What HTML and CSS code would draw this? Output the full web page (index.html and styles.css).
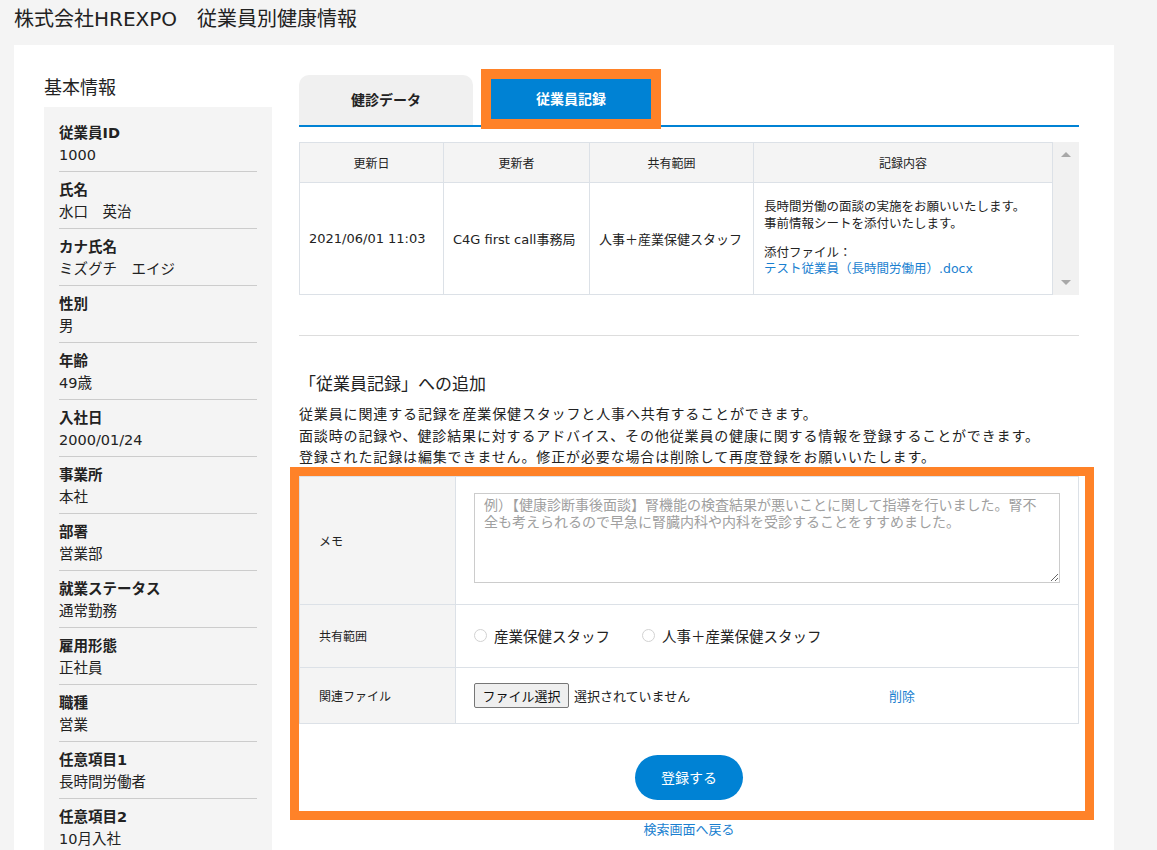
FILE: index.html
```html
<!DOCTYPE html>
<html lang="ja">

<head>
    <meta charset="UTF-8">
    <meta name="viewport" content="width=device-width, initial-scale=1.0">
    <title>従業員別健康情報</title>
    <link rel="stylesheet" href="styles.css">
</head>

<body>
    <header class="page-title">株式会社HREXPO　従業員別健康情報</header>

    <div class="container">
        <aside class="sidebar">
            <h2 class="sidebar-title">基本情報</h2>
            <dl class="info-list">
                <div class="info-item"><dt>従業員ID</dt><dd>1000</dd></div>
                <div class="info-item"><dt>氏名</dt><dd>水口　英治</dd></div>
                <div class="info-item"><dt>カナ氏名</dt><dd>ミズグチ　エイジ</dd></div>
                <div class="info-item"><dt>性別</dt><dd>男</dd></div>
                <div class="info-item"><dt>年齢</dt><dd>49歳</dd></div>
                <div class="info-item"><dt>入社日</dt><dd>2000/01/24</dd></div>
                <div class="info-item"><dt>事業所</dt><dd>本社</dd></div>
                <div class="info-item"><dt>部署</dt><dd>営業部</dd></div>
                <div class="info-item"><dt>就業ステータス</dt><dd>通常勤務</dd></div>
                <div class="info-item"><dt>雇用形態</dt><dd>正社員</dd></div>
                <div class="info-item"><dt>職種</dt><dd>営業</dd></div>
                <div class="info-item"><dt>任意項目1</dt><dd>長時間労働者</dd></div>
                <div class="info-item"><dt>任意項目2</dt><dd>10月入社</dd></div>
            </dl>
        </aside>

        <main class="content">
            <div class="tabs">
                <div class="tab">健診データ</div>
                <div class="tab active">従業員記録</div>
            </div>

            <div class="records">
                <table class="data-grid">
                    <colgroup>
                        <col style="width: 144px">
                        <col style="width: 146px">
                        <col style="width: 164px">
                        <col>
                    </colgroup>
                    <thead>
                        <tr>
                            <th>更新日</th>
                            <th>更新者</th>
                            <th>共有範囲</th>
                            <th>記録内容</th>
                        </tr>
                    </thead>
                    <tbody>
                        <tr>
                            <td>2021/06/01 11:03</td>
                            <td>C4G first call事務局</td>
                            <td>人事＋産業保健スタッフ</td>
                            <td class="record-body">
                                <p>長時間労働の面談の実施をお願いいたします。<br>事前情報シートを添付いたします。</p>
                                <p>添付ファイル：<br><a href="#" class="link">テスト従業員（長時間労働用）.docx</a></p>
                            </td>
                        </tr>
                    </tbody>
                </table>
                <div class="scrollbar">
                    <span class="arrow up"></span>
                    <span class="arrow down"></span>
                </div>
            </div>

            <hr class="divider">

            <h3 class="section-title">「従業員記録」への追加</h3>
            <p class="section-note">
                従業員に関連する記録を産業保健スタッフと人事へ共有することができます。<br>
                面談時の記録や、健診結果に対するアドバイス、その他従業員の健康に関する情報を登録することができます。<br>
                登録された記録は編集できません。修正が必要な場合は削除して再度登録をお願いいたします。
            </p>

            <div class="form-box">
                <table class="form-grid">
                    <tr class="memo-row">
                        <th>メモ</th>
                        <td><textarea class="memo" placeholder="例）【健康診断事後面談】腎機能の検査結果が悪いことに関して指導を行いました。腎不全も考えられるので早急に腎臓内科や内科を受診することをすすめました。"></textarea></td>
                    </tr>
                    <tr class="scope-row">
                        <th>共有範囲</th>
                        <td>
                            <label class="radio"><input type="radio" name="scope">産業保健スタッフ</label>
                            <label class="radio"><input type="radio" name="scope">人事＋産業保健スタッフ</label>
                        </td>
                    </tr>
                    <tr class="file-row">
                        <th>関連ファイル</th>
                        <td>
                            <div class="file-field">
                                <span class="file-picker">
                                    <button type="button" class="file-button">ファイル選択</button>
                                    <span class="file-name">選択されていません</span>
                                </span>
                                <a href="#" class="link">削除</a>
                            </div>
                        </td>
                    </tr>
                </table>
                <div class="form-actions">
                    <button type="button" class="submit-button">登録する</button>
                </div>
            </div>

            <a href="#" class="back-link">検索画面へ戻る</a>
        </main>
    </div>
</body>
</html>
```

FILE: styles.css
```css
html, body {
    margin: 0;
    background-color: #f4f4f4;
    color: #222;
    font-family: "DejaVu Sans", "Noto Sans CJK JP", sans-serif;
}

.page-title {
    height: 45px;
    line-height: 38px;
    padding-left: 14px;
    font-size: 20px;
}

.container {
    display: flex;
    width: 1100px;
    margin-left: 14px;
    padding: 0 35px 0 30px;
    box-sizing: border-box;
    background-color: #fff;
}

/* left column */
.sidebar {
    width: 228px;
    flex-shrink: 0;
}

.sidebar-title {
    margin: 0 0 7px;
    padding-top: 31px;
    line-height: 24px;
    font-size: 18px;
    font-weight: normal;
}

.info-list {
    margin: 0;
    padding: 8px 15px 0;
    background-color: #f4f4f4;
}

.info-item {
    padding: 7px 0 5px;
    border-bottom: 1px solid #ccc;
}

.info-item dt,
.info-item dd {
    margin: 0;
    line-height: 22px;
    font-size: 14.5px;
}

.info-item dt {
    font-weight: bold;
}

/* right column */
.content {
    width: 780px;
    margin-left: 27px;
    padding-top: 30px;
}

.tabs {
    display: flex;
    align-items: flex-start;
    height: 50px;
    border-bottom: 2px solid #0082d4;
}

.tab {
    width: 174px;
    height: 50px;
    line-height: 50px;
    text-align: center;
    font-size: 14px;
    font-weight: bold;
    background-color: #f0f0f0;
    border-radius: 10px 10px 0 0;
}

.tab.active {
    width: 160px;
    height: 40px;
    line-height: 40px;
    margin: 4px 0 0 18px;
    color: #fff;
    background-color: #0082d4;
    border-radius: 0;
    outline: 10px solid #ff8228;
}

.records {
    display: flex;
    margin-top: 15px;
}

.data-grid {
    width: 754px;
    border-collapse: collapse;
    table-layout: fixed;
}

.data-grid th,
.data-grid td {
    border: 1px solid #dce1e7;
    padding: 0 9px;
}

.data-grid th {
    height: 39px;
    font-size: 12px;
    font-weight: normal;
    background-color: #f4f4f4;
}

.data-grid td {
    height: 111px;
    font-size: 13px;
    vertical-align: middle;
}

.data-grid td.record-body {
    padding-left: 10px;
    font-size: 12.5px;
    line-height: 16.5px;
}

.record-body p {
    margin: 0;
}

.record-body p + p {
    margin-top: 12.5px;
}

.link {
    color: #1a7fd0;
    text-decoration: none;
}

.scrollbar {
    position: relative;
    width: 26px;
    background-color: #f1f1f1;
}

.arrow {
    position: absolute;
    left: 8px;
    width: 0;
    height: 0;
    border-left: 5.5px solid transparent;
    border-right: 5.5px solid transparent;
}

.arrow.up {
    top: 10px;
    border-bottom: 5px solid #a8a8a8;
}

.arrow.down {
    bottom: 10px;
    border-top: 5px solid #a8a8a8;
}

.divider {
    margin: 40px 0 0;
    border: none;
    border-top: 1px solid #ddd;
}

.section-title {
    margin: 36px 0 0;
    line-height: 24px;
    font-size: 17px;
    font-weight: normal;
}

.section-note {
    margin: 8px 0 0;
    font-size: 14px;
    letter-spacing: 0.86px;
    line-height: 21.5px;
}

/* add record form */
.form-box {
    width: 786px;
    margin-top: 7px;
    outline: 9px solid #ff8228;
    background-color: #fff;
}

.form-grid {
    width: 780px;
    border-collapse: collapse;
}

.form-grid th,
.form-grid td {
    border: 1px solid #dce1e7;
}

.form-grid th {
    width: 136px;
    padding: 0 0 0 19px;
    text-align: left;
    font-size: 12px;
    font-weight: normal;
    background-color: #f4f4f4;
}

.form-grid td {
    padding: 0 18px;
}

.memo-row td {
    padding-top: 16px;
    padding-bottom: 21px;
}

.memo {
    display: block;
    width: 586px;
    height: 90px;
    margin: 0;
    padding: 2px 9px;
    box-sizing: border-box;
    border: 1px solid #ccc;
    font-family: "Noto Sans CJK JP", sans-serif;
    font-size: 14px;
    line-height: 17px;
}

.memo::placeholder {
    color: #a0a0a0;
}

.scope-row td {
    height: 62px;
}

.radio {
    display: inline-flex;
    align-items: center;
    font-size: 14.5px;
}

.radio + .radio {
    margin-left: 27px;
}

.radio input {
    appearance: none;
    width: 13px;
    height: 13px;
    margin: 0 7px 0 0;
    border: 1px solid #d2d2d2;
    border-radius: 50%;
    background-color: #fff;
}

.file-row td {
    height: 55px;
}

.file-field {
    display: flex;
    align-items: center;
    font-size: 13px;
}

.file-picker {
    display: flex;
    align-items: center;
    width: 415px;
}

.file-button {
    width: 95px;
    height: 25px;
    padding: 0;
    border: 1px solid #767676;
    border-radius: 2px;
    background-color: #efefef;
    color: #111;
    font-family: inherit;
    font-size: 13px;
}

.file-name {
    margin-left: 5px;
}

.form-actions {
    display: flex;
    justify-content: center;
    padding: 31px 6px 11px 0;
}

.submit-button {
    width: 108px;
    height: 45px;
    border: none;
    border-radius: 23px;
    background-color: #0082d4;
    color: #fff;
    font-family: inherit;
    font-size: 14px;
}

.back-link {
    display: block;
    margin-top: 10px;
    line-height: 18px;
    text-align: center;
    font-size: 13px;
    color: #1a7fd0;
    text-decoration: none;
}
```
